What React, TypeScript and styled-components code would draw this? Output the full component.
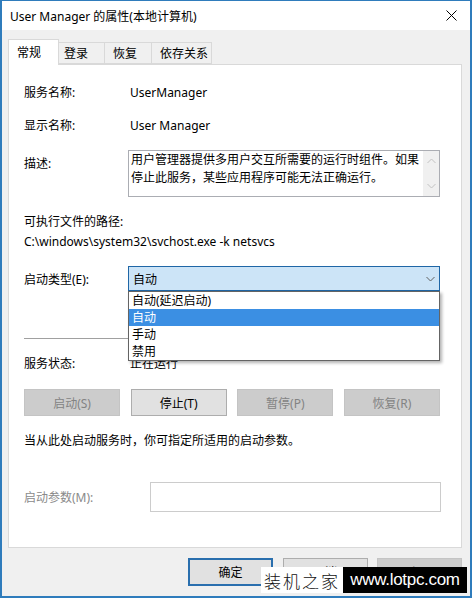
import React from 'react';
import styled, { createGlobalStyle } from 'styled-components';

const uiFont = `"Segoe UI", "Noto Sans", "Noto Sans CJK SC", sans-serif`;

const GlobalStyle = createGlobalStyle`
    html, body {
        margin: 0;
        padding: 0;
        background: #ffffff;
    }
    body {
        font-family: ${uiFont};
        font-size: 12px;
        color: #000000;
    }
`;

const tabs = [
    { label: '常规', width: 51, pad: 8, active: true },
    { label: '登录', width: 46, pad: 5 },
    { label: '恢复', width: 47, pad: 8 },
    { label: '依存关系', width: 60, pad: 8 },
];

const startupOptions = ['自动(延迟启动)', '自动', '手动', '禁用'];

const Chevron: React.FC<{ up?: boolean; color?: string }> = ({ up, color = '#606060' }) => (
    <svg width="9" height="6" viewBox="0 0 9 6">
        <path
            d={up ? 'M0.5 5 L4.5 1 L8.5 5' : 'M0.5 1 L4.5 5 L8.5 1'}
            fill="none"
            stroke={color}
            strokeWidth="1"
        />
    </svg>
);

const App: React.FC = () => {
    return (
        <>
            <GlobalStyle />
            <Frame>
                <TitleBar>
                    <span>User Manager 的属性(本地计算机)</span>
                    <CloseButton>
                        <svg width="11" height="11" viewBox="0 0 11 11">
                            <path d="M0.5 0.5 L10.5 10.5 M10.5 0.5 L0.5 10.5" stroke="#000" strokeWidth="1" />
                        </svg>
                    </CloseButton>
                </TitleBar>

                <Body>
                    <TabRow>
                        {tabs.map((t) => (
                            <Tab key={t.label} $active={t.active} $width={t.width} $pad={t.pad}>
                                {t.label}
                            </Tab>
                        ))}
                    </TabRow>

                    <Panel>
                        <InfoRow $top={20}>
                            <Label>服务名称:</Label>
                            <span>UserManager</span>
                        </InfoRow>
                        <InfoRow $top={17}>
                            <Label>显示名称:</Label>
                            <span>User Manager</span>
                        </InfoRow>

                        <DescRow>
                            <DescLabel>描述:</DescLabel>
                            <DescBox>
                                <DescText>
                                    用户管理器提供多用户交互所需要的运行时组件。如果
                                    <br />
                                    停止此服务，某些应用程序可能无法正确运行。
                                </DescText>
                                <ScrollBar>
                                    <Chevron up color="#c2c2c2" />
                                    <Chevron color="#c2c2c2" />
                                </ScrollBar>
                            </DescBox>
                        </DescRow>

                        <TextLine $top={17}>可执行文件的路径:</TextLine>
                        <TextLine $top={4}>C:\windows\system32\svchost.exe -k netsvcs</TextLine>

                        <ComboRow>
                            <ComboLabel>启动类型(E):</ComboLabel>
                            <ComboWrap>
                                <Combo>
                                    <span>自动</span>
                                    <Chevron />
                                </Combo>
                                <DropList>
                                    {startupOptions.map((o) => (
                                        <DropItem key={o} $selected={o === '自动'}>
                                            {o}
                                        </DropItem>
                                    ))}
                                </DropList>
                            </ComboWrap>
                        </ComboRow>

                        <Separator />

                        <InfoRow $top={17}>
                            <Label>服务状态:</Label>
                            <span>正在运行</span>
                        </InfoRow>

                        <ServiceButtons>
                            <Button $disabled>启动(S)</Button>
                            <Button>停止(T)</Button>
                            <Button $disabled>暂停(P)</Button>
                            <Button $disabled>恢复(R)</Button>
                        </ServiceButtons>

                        <TextLine $top={17}>当从此处启动服务时，你可指定所适用的启动参数。</TextLine>

                        <ParamRow>
                            <ParamLabel>启动参数(M):</ParamLabel>
                            <ParamInput />
                        </ParamRow>
                    </Panel>

                    <Footer>
                        <FooterButton $primary>确定</FooterButton>
                        <FooterButton>取消</FooterButton>
                        <FooterButton $disabled>应用</FooterButton>
                    </Footer>
                </Body>

                <Watermark>
                    <WatermarkName>装机之家</WatermarkName>
                    <WatermarkUrl>www.lotpc.com</WatermarkUrl>
                </Watermark>
            </Frame>
        </>
    );
};

const Frame = styled.div`
    position: relative;
    width: 472px;
    height: 598px;
    box-sizing: border-box;
    border: 1px solid #2f7cbc;
    border-left-width: 2px;
    border-right-width: 2px;
    border-bottom-width: 2px;
    background: #f0f0f0;
    display: flex;
    flex-direction: column;
    overflow: hidden;
`;

const TitleBar = styled.div`
    height: 29px;
    flex-shrink: 0;
    background: #ffffff;
    display: flex;
    align-items: center;
    justify-content: space-between;
    padding: 0 8px 0 8px;
    font-size: 12px;
`;

const CloseButton = styled.div`
    display: flex;
    align-items: center;
    justify-content: center;
    width: 20px;
    height: 20px;
    margin-right: 1px;
`;

const Body = styled.div`
    flex: 1;
    display: flex;
    flex-direction: column;
    padding: 9px 8px 0 6px;
`;

const TabRow = styled.div`
    display: flex;
    align-items: flex-end;
    height: 25px;
    position: relative;
    z-index: 1;
`;

const Tab = styled.div<{ $active?: boolean; $width: number; $pad: number }>`
    box-sizing: border-box;
    width: ${(p) => p.$width}px;
    height: ${(p) => (p.$active ? 26 : 22)}px;
    margin-bottom: ${(p) => (p.$active ? -1 : 0)}px;
    padding-left: ${(p) => p.$pad}px;
    display: flex;
    align-items: center;
    background: ${(p) => (p.$active ? '#ffffff' : '#f0f0f0')};
    border: 1px solid #d9d9d9;
    border-bottom: ${(p) => (p.$active ? 'none' : '1px solid #d9d9d9')};
    border-left-width: ${(p) => (p.$active ? 1 : 0)}px;
    padding-bottom: ${(p) => (p.$active ? 2 : 0)}px;
`;

const Panel = styled.div`
    background: #ffffff;
    border: 1px solid #d9d9d9;
    display: flex;
    flex-direction: column;
    padding: 0 21px 35px 15px;
`;

const InfoRow = styled.div<{ $top: number }>`
    display: flex;
    align-items: center;
    height: 16px;
    line-height: 16px;
    margin-top: ${(p) => p.$top}px;
    white-space: nowrap;
`;

const Label = styled.div`
    width: 106px;
    flex-shrink: 0;
`;

const TextLine = styled.div<{ $top: number }>`
    height: 16px;
    line-height: 16px;
    margin-top: ${(p) => p.$top}px;
    white-space: nowrap;
`;

const DescRow = styled.div`
    display: flex;
    margin-top: 16px;
`;

const DescLabel = styled.div`
    width: 104px;
    flex-shrink: 0;
    padding-top: 6px;
    line-height: 16px;
`;

const DescBox = styled.div`
    flex: 1;
    height: 47px;
    box-sizing: border-box;
    border: 1px solid #abadb3;
    display: flex;
`;

const DescText = styled.div`
    flex: 1;
    padding: 0 0 0 2px;
    line-height: 18px;
    white-space: nowrap;
`;

const ScrollBar = styled.div`
    width: 16px;
    background: #f0f0f0;
    display: flex;
    flex-direction: column;
    align-items: center;
    justify-content: space-between;
    padding: 7px 0 7px;
`;

const ComboRow = styled.div`
    display: flex;
    align-items: center;
    margin-top: 16px;
`;

const ComboLabel = styled.div`
    width: 104px;
    flex-shrink: 0;
`;

const ComboWrap = styled.div`
    flex: 1;
    position: relative;
`;

const Combo = styled.div`
    height: 25px;
    box-sizing: border-box;
    background: #cce4f7;
    border: 1px solid #1f66a6;
    display: flex;
    align-items: center;
    justify-content: space-between;
    padding: 0 4px 0 4px;
`;

const DropList = styled.div`
    position: absolute;
    top: 100%;
    left: 0;
    right: 0;
    background: #ffffff;
    border: 1px solid #646464;
    box-shadow: 2px 2px 3px rgba(0, 0, 0, 0.3);
    z-index: 5;
`;

const DropItem = styled.div<{ $selected?: boolean }>`
    height: 17px;
    line-height: 17px;
    padding-left: 3px;
    background: ${(p) => (p.$selected ? '#3b8fe3' : '#ffffff')};
    color: ${(p) => (p.$selected ? '#ffffff' : '#000000')};
`;

const Separator = styled.div`
    height: 1px;
    background: #a0a0a0;
    margin-top: 47px;
`;

const ServiceButtons = styled.div`
    display: grid;
    grid-template-columns: repeat(4, 1fr);
    column-gap: 10.5px;
    margin-top: 17px;
`;

const Button = styled.div<{ $disabled?: boolean }>`
    height: 27px;
    box-sizing: border-box;
    display: flex;
    align-items: center;
    justify-content: center;
    background: ${(p) => (p.$disabled ? '#cccccc' : '#e1e1e1')};
    border: 1px solid ${(p) => (p.$disabled ? '#c4c4c4' : '#adadad')};
    color: ${(p) => (p.$disabled ? '#838383' : '#000000')};
`;

const ParamRow = styled.div`
    display: flex;
    align-items: center;
    margin-top: 33px;
`;

const ParamLabel = styled.div`
    width: 126px;
    flex-shrink: 0;
    color: #8a8a8a;
`;

const ParamInput = styled.div`
    flex: 1;
    height: 30px;
    box-sizing: border-box;
    border: 1px solid #cccccc;
    background: #ffffff;
    margin-right: -1px;
`;

const Footer = styled.div`
    display: flex;
    justify-content: flex-end;
    gap: 9.5px;
    padding-top: 10px;
`;

const FooterButton = styled.div<{ $primary?: boolean; $disabled?: boolean }>`
    width: 85px;
    height: 28px;
    box-sizing: border-box;
    display: flex;
    align-items: center;
    justify-content: center;
    background: ${(p) => (p.$disabled ? '#cccccc' : '#e1e1e1')};
    border: ${(p) => (p.$primary ? '2px solid #2a6fae' : p.$disabled ? '1px solid #c4c4c4' : '1px solid #adadad')};
    color: ${(p) => (p.$disabled ? '#838383' : '#000000')};
`;

const Watermark = styled.div`
    position: absolute;
    left: 259px;
    top: 566px;
    display: flex;
    height: 26px;
    z-index: 10;
`;

const WatermarkName = styled.div`
    width: 82px;
    background: #ffffff;
    display: flex;
    align-items: center;
    justify-content: center;
    font-family: "Noto Sans CJK SC", serif;
    font-size: 17px;
    font-weight: 300;
    letter-spacing: 2px;
    color: #111111;
`;

const WatermarkUrl = styled.div`
    width: 124px;
    background: #000000;
    color: #ffffff;
    display: flex;
    align-items: center;
    justify-content: center;
    font-family: "Liberation Sans", Arial, sans-serif;
    font-size: 17px;
    letter-spacing: -0.3px;
`;

export default App;
